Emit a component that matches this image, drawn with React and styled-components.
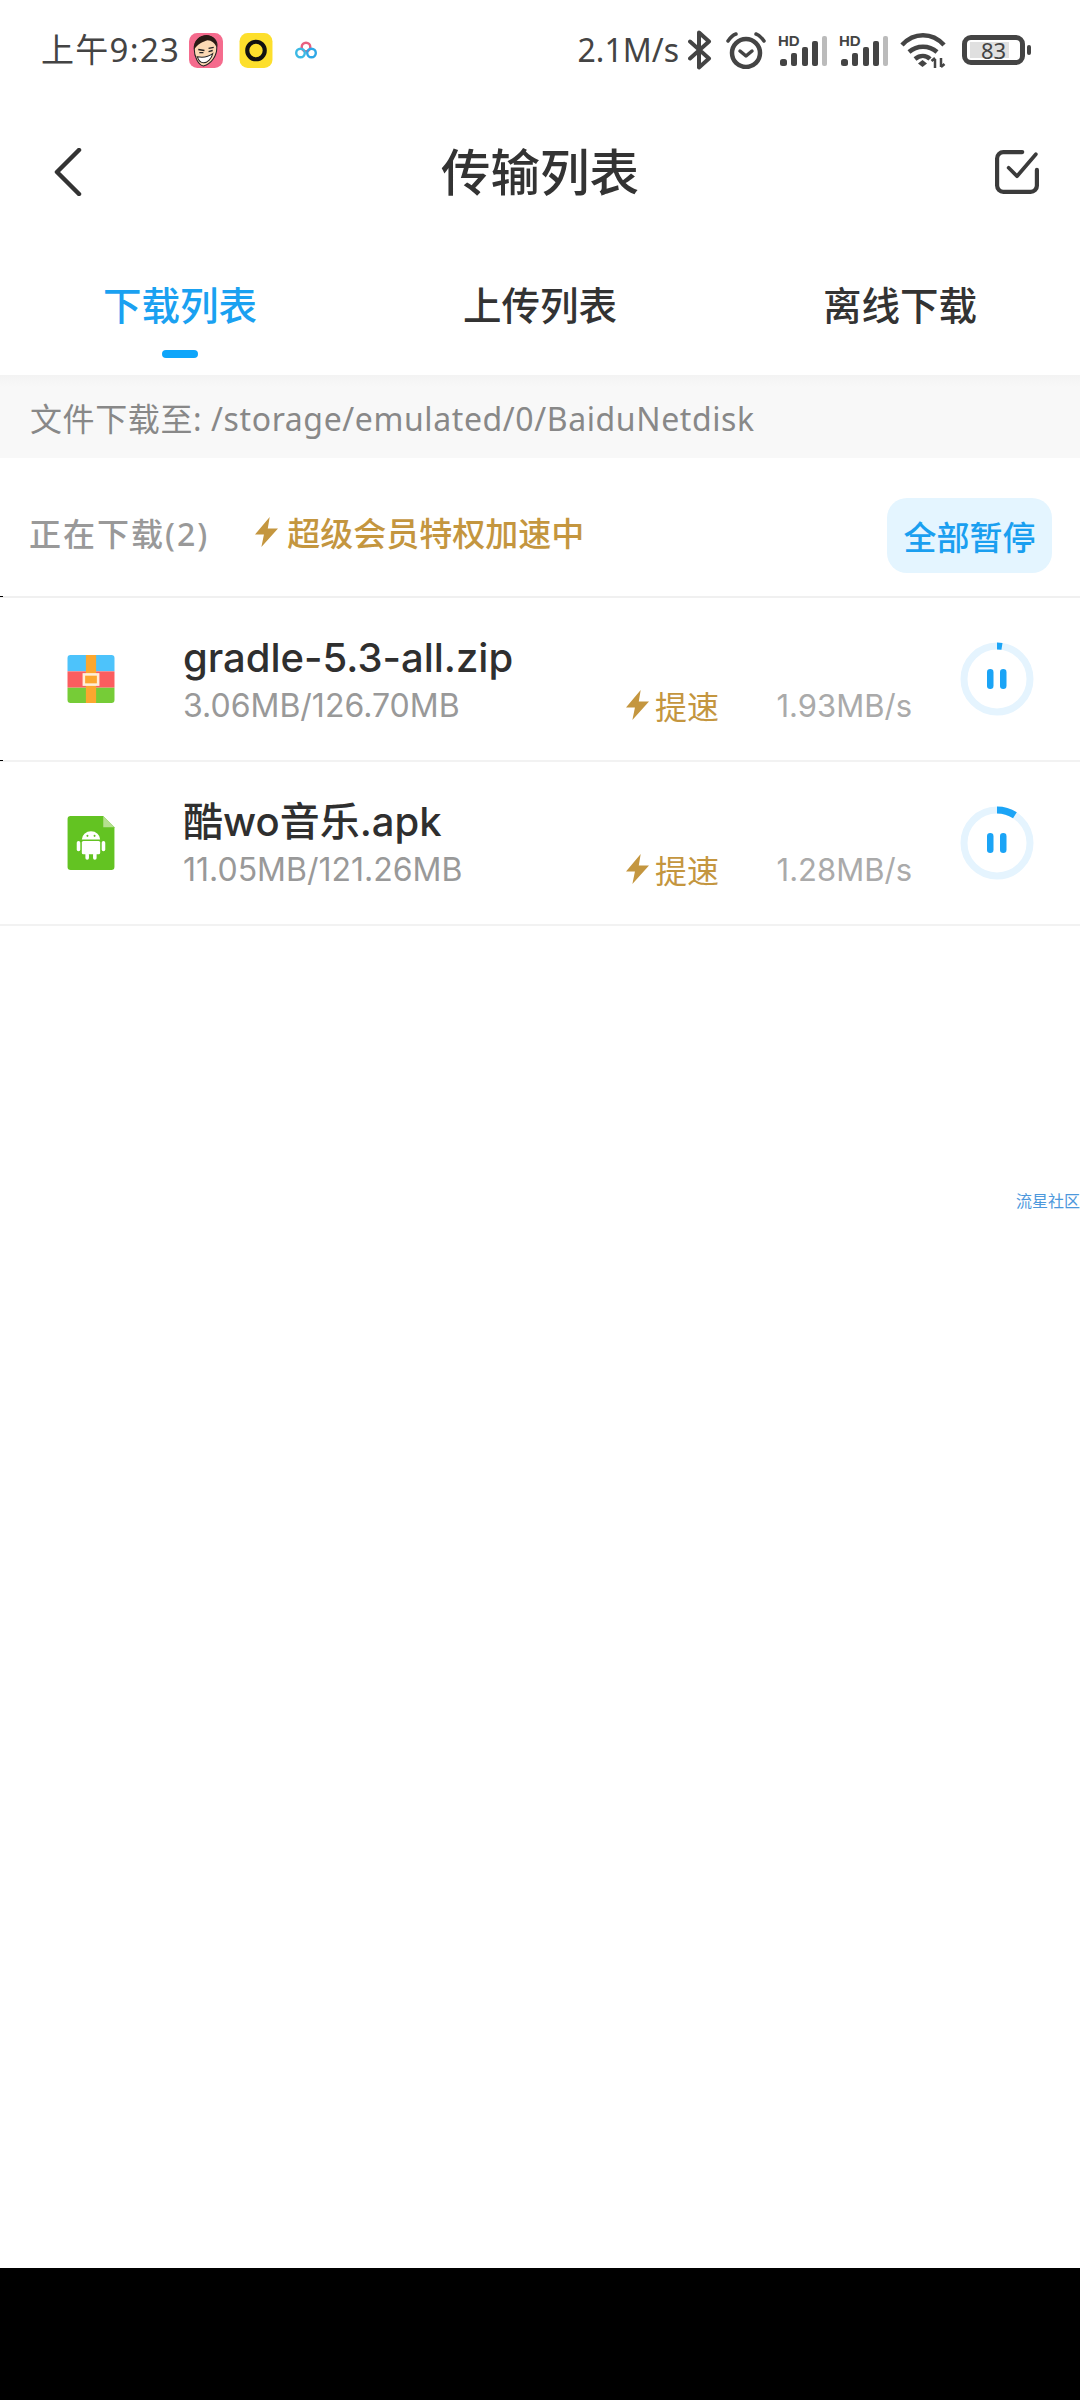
import styled, { createGlobalStyle } from 'styled-components';

const files = [
  { name: 'gradle-5.3-all.zip', done: 3.06, total: 126.7, size: '3.06MB/126.70MB', speed: '1.93MB/s', kind: 'zip' },
  { name: '酷wo音乐.apk', done: 11.05, total: 121.26, size: '11.05MB/121.26MB', speed: '1.28MB/s', kind: 'apk' },
];

function Bolt() {
  return (
    <svg width="23" height="30" viewBox="1 0 18 29" preserveAspectRatio="none">
      <path d="M12.5 0 1 17h7L6 29l13-18h-8z" fill="#c4963f" />
    </svg>
  );
}

function FaceIcon() {
  return (
    <svg width="34" height="35" viewBox="0 0 33 34">
      <rect width="33" height="34" rx="8" fill="#f56b8d" />
      <path d="M5 15C5 8 10 3 17 3s11 5 10 11c0 8-5 16-13 18-5-1-9-9-9-17z" fill="#fbd9b4" stroke="#222" strokeWidth="1" />
      <path d="M5 16C4 7 11 2 17 2s11 5 10 12c-2-4-5-7-9-7-4 1-10 4-13 9z" fill="#2a1a14" />
      <path d="M9 16l6 1M19 15l5-1M10 19h4M19 18l4-1" stroke="#222" strokeWidth="1.3" fill="none" />
      <path d="M8 23c5 1 11 0 15-3-1 5-5 9-9 9-3 0-5-3-6-6z" fill="#fff" stroke="#222" strokeWidth="1" />
    </svg>
  );
}

function RingAppIcon() {
  return (
    <svg width="34" height="35" viewBox="0 0 32 34">
      <rect width="32" height="34" rx="8" fill="#fddf2c" />
      <circle cx="16" cy="17" r="8.5" fill="none" stroke="#111" strokeWidth="4" />
    </svg>
  );
}

function CloudIcon() {
  return (
    <svg width="22" height="18" viewBox="0 0 22 18">
      <circle cx="11" cy="6" r="4.3" fill="none" stroke="#e9607f" strokeWidth="2.4" />
      <circle cx="5.5" cy="12" r="4.3" fill="none" stroke="#3cb9e4" strokeWidth="2.4" />
      <circle cx="16.5" cy="12" r="4.3" fill="none" stroke="#2ea7e6" strokeWidth="2.4" />
    </svg>
  );
}

function BluetoothIcon() {
  return (
    <svg width="24" height="40" viewBox="0 0 24 39" fill="none" stroke="#444" strokeWidth="4" strokeLinejoin="round" strokeLinecap="round">
      <path d="M2 11l19 17-10 9V2l10 9L2 28" />
    </svg>
  );
}

function AlarmIcon() {
  return (
    <svg width="42" height="38" viewBox="-2 0 42 38" fill="none" stroke="#444" strokeLinecap="round">
      <circle cx="20" cy="22" r="14" strokeWidth="4.5" />
      <path d="M14 20l6 5 6-5" strokeWidth="3.5" strokeLinejoin="round" />
      <path d="M2 10c2-3 5-6 8-7M38 10c-2-3-5-6-8-7" strokeWidth="3.5" />
    </svg>
  );
}

function SignalIcon() {
  return (
    <svg width="49" height="34" viewBox="0 -2 49 34">
      <text x="0" y="11" fontFamily="'Liberation Sans', sans-serif" fontWeight="700" fontSize="15" fill="#444">HD</text>
      <rect x="2" y="24" width="7" height="7" rx="2.5" fill="#444" />
      <rect x="13" y="18" width="6" height="13" rx="2" fill="#444" />
      <rect x="24" y="12" width="6" height="19" rx="2" fill="#444" />
      <rect x="34" y="6" width="6" height="25" rx="2" fill="#444" />
      <rect x="44" y="1" width="5" height="30" rx="2" fill="#bbb" />
    </svg>
  );
}

function WifiIcon() {
  return (
    <svg width="46" height="35" viewBox="0 0 46 35" fill="none" stroke="#444" strokeWidth="4.5">
      <path d="M2 12C14-1 32-1 44 12" />
      <path d="M9 19c8-7 20-7 28 0" />
      <path d="M15 26c5-4 11-4 15 0" />
      <path d="M18 30.500l4.500-3.500 4.500 3.500-4.500 3.500z" fill="#444" stroke="none" />
      <path d="M35 35v-9M31.500 28l3.500-3M41 25v9M44.500 31l-3.500 3" strokeWidth="2.5" />
    </svg>
  );
}

function BackIcon() {
  return (
    <svg width="28" height="48" viewBox="0 0 28 48" fill="none" stroke="#333" strokeWidth="4.5" strokeLinecap="round" strokeLinejoin="round">
      <path d="M25 2 3 24l22 22" />
    </svg>
  );
}

function SelectIcon() {
  return (
    <svg width="44" height="44" viewBox="0 0 42 42" fill="none" stroke="#3b3b3b" strokeWidth="4" strokeLinecap="round" strokeLinejoin="round">
      <path d="M26 2H8a6 6 0 0 0-6 6v26a6 6 0 0 0 6 6h26a6 6 0 0 0 6-6V19" />
      <path d="M13 17l8 8L39 4" strokeWidth="3.5" />
    </svg>
  );
}

function ZipIcon() {
  return (
    <svg width="48" height="48" viewBox="0 0 46 47">
      <path d="M0 16V3a3 3 0 0 1 3-3h40a3 3 0 0 1 3 3v13z" fill="#4dc3fb" />
      <rect width="46" height="16" y="16" fill="#fb5d5f" />
      <path d="M0 32h46v12a3 3 0 0 1-3 3H3a3 3 0 0 1-3-3z" fill="#76cc37" />
      <rect x="18" width="10" height="47" fill="#fca72f" />
      <rect x="16" y="19" width="14" height="10" fill="#fca72f" stroke="#ffeeda" strokeWidth="2.5" />
    </svg>
  );
}

function ApkIcon() {
  return (
    <svg width="48" height="54" viewBox="0 0 46 53">
      <path d="M3 0h32l11 11v39a3 3 0 0 1-3 3H3a3 3 0 0 1-3-3V3a3 3 0 0 1 3-3z" fill="#63c322" />
      <path d="M35 0l11 11H35z" fill="#b5e08f" />
      <g fill="#fff">
        <path d="M14 23a9 8 0 0 1 18 0z" />
        <rect x="14" y="24.500" width="18" height="13" rx="1.500" />
        <rect x="9" y="24.500" width="3.500" height="10" rx="1.700" />
        <rect x="33.500" y="24.500" width="3.500" height="10" rx="1.700" />
        <rect x="17.500" y="36" width="3.500" height="7" rx="1.700" />
        <rect x="25" y="36" width="3.500" height="7" rx="1.700" />
      </g>
      <circle cx="19.500" cy="19.500" r="1" fill="#63c322" />
      <circle cx="26.500" cy="19.500" r="1" fill="#63c322" />
    </svg>
  );
}

function ProgressRing({ value }) {
  const r = 33;
  const length = 2 * Math.PI * r;
  return (
    <svg width="74" height="74" viewBox="0 0 74 74">
      <circle cx="37" cy="37" r={r} fill="none" stroke="#e5f4fe" strokeWidth="7" />
      <circle
        cx="37"
        cy="37"
        r={r}
        fill="none"
        stroke="#1ba4f6"
        strokeWidth="7"
        strokeDasharray={`${length * value} ${length}`}
        transform="rotate(-90 37 37)"
      />
      <rect x="27" y="27" width="6.500" height="20" rx="3.200" fill="#1ba4f6" />
      <rect x="40" y="27" width="6.500" height="20" rx="3.200" fill="#1ba4f6" />
    </svg>
  );
}

export default function App() {
  return (
    <>
      <GlobalStyle />
      <Page>
        <Main>
          <StatusBar>
            <StatusGroup>
              <Time>上午9:23</Time>
              <AppIcons>
                <FaceIcon />
                <RingAppIcon />
                <CloudWrap>
                  <CloudIcon />
                </CloudWrap>
              </AppIcons>
            </StatusGroup>
            <StatusGroup>
              <NetSpeed>2.1M/s</NetSpeed>
              <SystemIcons>
                <BluetoothIcon />
                <AlarmIcon />
                <SignalIcon />
                <SignalIcon />
                <WifiIcon />
                <Battery>
                  <BatteryFill />
                  <BatteryLevel>83</BatteryLevel>
                  <BatteryNub />
                </Battery>
              </SystemIcons>
            </StatusGroup>
          </StatusBar>

          <NavBar>
            <NavLeft>
              <BackIcon />
            </NavLeft>
            <Title>传输列表</Title>
            <NavRight>
              <SelectIcon />
            </NavRight>
          </NavBar>

          <Tabs>
            <Tab>
              <TabLabel $active>下载列表</TabLabel>
              <TabMark />
            </Tab>
            <Tab>
              <TabLabel>上传列表</TabLabel>
            </Tab>
            <Tab>
              <TabLabel>离线下载</TabLabel>
            </Tab>
          </Tabs>

          <PathBar>文件下载至: /storage/emulated/0/BaiduNetdisk</PathBar>

          <ListHeader>
            <HeaderCount>正在下载(2)</HeaderCount>
            <VipNote>
              <Bolt />
              超级会员特权加速中
            </VipNote>
            <PauseAll>全部暂停</PauseAll>
          </ListHeader>

          {files.map((file) => (
            <FileRow key={file.name} $tick={file.kind === 'zip'}>
              <FileIcon>{file.kind === 'zip' ? <ZipIcon /> : <ApkIcon />}</FileIcon>
              <FileBody>
                <FileName>{file.name}</FileName>
                <FileMeta>
                  <FileSize>{file.size}</FileSize>
                  <Boost>
                    <Bolt />
                    提速
                  </Boost>
                  <Speed>{file.speed}</Speed>
                </FileMeta>
              </FileBody>
              <ProgressRing value={file.done / file.total} />
            </FileRow>
          ))}

          <Watermark>流星社区</Watermark>
        </Main>
        <BottomBar />
      </Page>
    </>
  );
}

const GlobalStyle = createGlobalStyle`
  html, body {
    margin: 0;
    padding: 0;
    background: #fff;
  }
  body {
    font-family: "Noto Sans", "Noto Sans CJK SC", sans-serif;
  }
`;

const Page = styled.div`
  display: flex;
  flex-direction: column;
  width: 1080px;
  height: 2400px;
  overflow: hidden;
`;

const Main = styled.main`
  position: relative;
  flex: 1;
  background: #fff;
`;

const BottomBar = styled.div`
  height: 132px;
  background: #000;
`;

const StatusBar = styled.div`
  display: flex;
  align-items: center;
  justify-content: space-between;
  height: 100px;
  padding: 0 55px 0 41px;
`;

const StatusGroup = styled.div`
  display: flex;
  align-items: center;
`;

const Time = styled.span`
  font-size: 33px;
  letter-spacing: 1.3px;
  color: #444;
  line-height: 40px;
`;

const AppIcons = styled.div`
  display: flex;
  align-items: center;
  gap: 16px;
  margin-left: 9px;
`;

const CloudWrap = styled.div`
  display: flex;
  margin-left: 6px;
`;

const NetSpeed = styled.span`
  font-size: 32px;
  color: #444;
  line-height: 40px;
`;

const SystemIcons = styled.div`
  display: flex;
  align-items: center;
  gap: 12px;
  margin-left: 9px;
`;

const Battery = styled.div`
  position: relative;
  display: flex;
  align-items: center;
  justify-content: center;
  box-sizing: border-box;
  width: 63px;
  height: 30px;
  margin-left: 4px;
  border: 5px solid #444;
  border-radius: 9px;
`;

const BatteryFill = styled.div`
  position: absolute;
  left: 3px;
  top: 2px;
  bottom: 2px;
  width: 39px;
  background: #e0e0e0;
`;

const BatteryLevel = styled.span`
  position: relative;
  font-size: 22px;
  line-height: 20px;
  color: #444;
`;

const BatteryNub = styled.div`
  position: absolute;
  right: -11px;
  top: 5px;
  width: 4px;
  height: 10px;
  border-radius: 2px;
  background: #444;
`;

const NavBar = styled.div`
  display: grid;
  grid-template-columns: 1fr auto 1fr;
  align-items: center;
  height: 144px;
`;

const NavLeft = styled.div`
  display: flex;
  padding-left: 54px;
`;

const NavRight = styled.div`
  display: flex;
  justify-content: flex-end;
  padding-right: 41px;
`;

const Title = styled.h1`
  margin: 0;
  font-size: 49.5px;
  font-weight: 500;
  line-height: 64px;
  color: #333;
`;

const Tabs = styled.div`
  display: grid;
  grid-template-columns: repeat(3, 1fr);
  height: 131px;
  box-sizing: border-box;
  padding-top: 39px;
`;

const Tab = styled.div`
  display: flex;
  flex-direction: column;
  align-items: center;
  gap: 23px;
`;

const TabLabel = styled.span`
  font-size: 38.5px;
  font-weight: 500;
  line-height: 44px;
  color: ${({ $active }) => ($active ? '#1aa1f1' : '#333')};
`;

const TabMark = styled.div`
  width: 36px;
  height: 8px;
  border-radius: 4px;
  background: #0ea5fa;
`;

const PathBar = styled.div`
  display: flex;
  align-items: center;
  height: 83px;
  padding-left: 30px;
  background: linear-gradient(#f3f3f3, #f8f8f8 12px);
  font-size: 32px;
  letter-spacing: 0.6px;
  color: #888;
`;

const ListHeader = styled.div`
  position: relative;
  display: flex;
  align-items: center;
  height: 140px;
  box-sizing: border-box;
  padding: 10px 28px 0 29px;
  border-bottom: 2px solid #f0f0f0;
  &::after {
    content: '';
    position: absolute;
    left: 0;
    bottom: -1px;
    width: 3px;
    height: 1px;
    background: #000;
  }
`;

const HeaderCount = styled.span`
  font-size: 32px;
  font-weight: 500;
  letter-spacing: 2px;
  color: #999;
`;

const VipNote = styled.span`
  display: flex;
  align-items: center;
  gap: 9px;
  margin-left: 46px;
  font-size: 33px;
  font-weight: 500;
  color: #c4963f;
`;

const PauseAll = styled.button`
  width: 165px;
  height: 75px;
  margin: 7px 0 0 auto;
  padding: 0;
  border: 0;
  border-radius: 20px;
  background: #e4f5ff;
  font: inherit;
  font-size: 33px;
  font-weight: 500;
  color: #1a9ff0;
`;

const FileRow = styled.div`
  position: relative;
  display: flex;
  align-items: center;
  height: 164px;
  box-sizing: border-box;
  padding: 0 46px 0 67px;
  border-bottom: 2px solid #f2f2f2;
  &::after {
    content: '';
    position: absolute;
    left: 0;
    bottom: -1px;
    width: 3px;
    height: 1px;
    background: ${({ $tick }) => ($tick ? '#000' : 'transparent')};
  }
`;

const FileIcon = styled.div`
  display: flex;
  width: 116px;
`;

const FileBody = styled.div`
  flex: 1;
  display: flex;
  flex-direction: column;
`;

const FileName = styled.div`
  font-family: Inter, "Noto Sans CJK SC", sans-serif;
  font-size: 40px;
  font-weight: 500;
  line-height: 52px;
  color: #2f2f2f;
`;

const FileMeta = styled.div`
  display: grid;
  grid-template-columns: 443px 150px 136px;
  align-items: center;
  height: 44px;
  margin-top: -2px;
  font-family: Inter, "Noto Sans CJK SC", sans-serif;
`;

const FileSize = styled.span`
  font-size: 32px;
  color: #999;
`;

const Boost = styled.span`
  display: flex;
  align-items: center;
  gap: 6px;
  font-size: 32px;
  color: #c4963f;
`;

const Speed = styled.span`
  font-size: 31px;
  color: #aaa;
  text-align: right;
`;

const Watermark = styled.span`
  position: absolute;
  right: 0;
  top: 1189px;
  font-size: 16px;
  line-height: 24px;
  color: #4d98dc;
`;
